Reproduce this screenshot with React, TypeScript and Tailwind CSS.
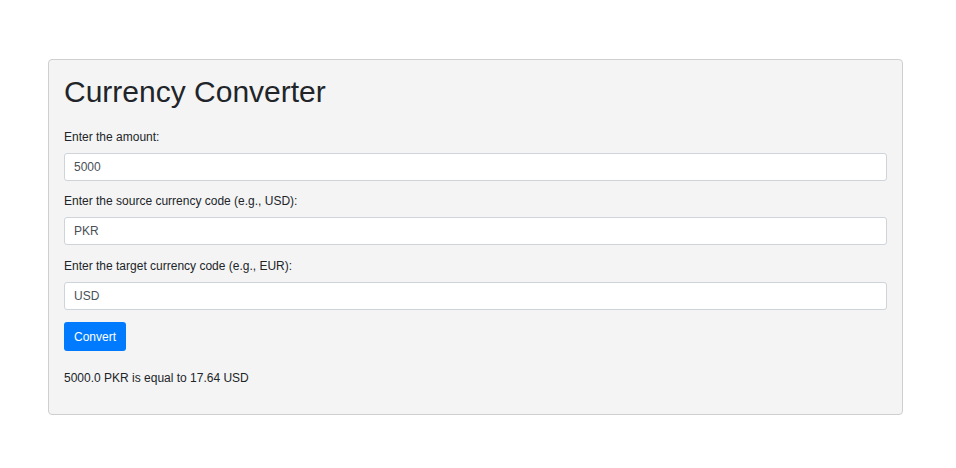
import { useState } from "react";

const FIELDS = [
  { key: "amount", label: "Enter the amount:", value: "5000" },
  { key: "from", label: "Enter the source currency code (e.g., USD):", value: "PKR" },
  { key: "to", label: "Enter the target currency code (e.g., EUR):", value: "USD" },
];

export default function App() {
  const [values, setValues] = useState<Record<string, string>>(
    Object.fromEntries(FIELDS.map((f) => [f.key, f.value]))
  );

  return (
    <div className="min-h-[468px] bg-white pt-[59px] font-['Liberation_Sans',Arial,sans-serif] text-[#212529]">
      <div className="ml-[48px] w-[855px] h-[356px] rounded-[4px] border border-[#cfcfcf] bg-[#f4f4f4] px-[15px] pt-[14px]">
        <h1 className="text-[30px] leading-[36px] font-normal">Currency Converter</h1>

        <div className="mt-[18px]">
          {FIELDS.map((f, i) => (
            <div key={f.key} className={i === 1 ? "mt-[11px]" : i === 2 ? "mt-[12px]" : ""}>
              <label className="block text-[12px] leading-[18px]">{f.label}</label>
              <input
                value={values[f.key]}
                onChange={(e) => setValues({ ...values, [f.key]: e.target.value })}
                className="mt-[7px] block w-full h-[28px] rounded-[3px] border border-[#ced4da] bg-white px-[9px] text-[12px] text-[#495057] outline-none"
              />
            </div>
          ))}
        </div>

        <button className="mt-[12px] h-[29px] w-[62px] rounded-[3px] bg-[#007bff] text-[12px] text-white">
          Convert
        </button>

        <p className="mt-[18px] text-[12px] leading-[18px]">5000.0 PKR is equal to 17.64 USD</p>
      </div>
    </div>
  );
}
